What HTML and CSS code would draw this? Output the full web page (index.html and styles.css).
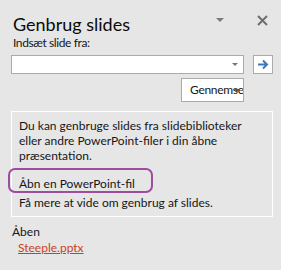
FILE: index.html
```html
<!DOCTYPE html>
<html lang="da">
<head>
<meta charset="UTF-8">
<title>Genbrug slides</title>
<link rel="stylesheet" href="styles.css">
</head>
<body>
<div class="pane">
  <div class="pane-head">
    <h1 class="pane-title">Genbrug slides</h1>
    <span class="head-caret"></span>
    <span class="close">
      <svg width="11" height="11" viewBox="0 0 11 11"><path d="M1 1 L10 10 M10 1 L1 10" stroke="#6e6e6e" stroke-width="2"/></svg>
    </span>
  </div>
  <div class="field-label">Indsæt slide fra:</div>
  <div class="source-row">
    <div class="combo"><span class="combo-caret"></span></div>
    <button class="go-btn">
      <svg width="12" height="11" viewBox="0 0 12 11"><path d="M1 5.5 H10 M6 1.5 L10 5.5 L6 9.5" fill="none" stroke="#3c79c4" stroke-width="2"/></svg>
    </button>
  </div>
  <div class="browse-row">
    <button class="browse-btn">Gennemse<span class="browse-caret"></span></button>
  </div>
  <div class="info">
    <p>Du kan genbruge slides fra slidebiblioteker<br>eller andre PowerPoint-filer i din åbne<br>præsentation.</p>
    <p class="info-open">Åbn en PowerPoint-fil<span class="highlight"></span></p>
    <p>Få mere at vide om genbrug af slides.</p>
  </div>
  <div class="recent-label">Åben</div>
  <a class="recent-file" href="#">Steeple.pptx</a>
</div>
</body>
</html>
```

FILE: styles.css
```css
/* Task pane */
body {
  margin: 0;
  background-color: #e6e6e6;
  font-family: Lato, sans-serif;
  font-size: 12px;
  color: #161616;
}
.pane {
  padding: 0 8px 0 11px;
}
.pane-head {
  display: flex;
  align-items: flex-start;
  padding-top: 14px;
  height: 20px;
}
.pane-title {
  margin: 0 0 0 2px;
  font-size: 18px;
  line-height: 20px;
  font-weight: normal;
  color: #0a0a0a;
  flex: 1;
}
.head-caret {
  width: 0;
  height: 0;
  margin-top: 4px;
  border-left: 4px solid transparent;
  border-right: 4px solid transparent;
  border-top: 4px solid #7a7a7a;
  margin-right: 33px;
}
.close {
  display: flex;
  margin: 1px 5px 0 0;
}
.field-label {
  margin: 2px 0 0 2px;
  line-height: 14px;
  letter-spacing: -0.4px;
}
.source-row {
  display: flex;
  gap: 9px;
  margin-top: 5px;
}
.combo {
  flex: 1;
  box-sizing: border-box;
  height: 19px;
  background-color: #fff;
  border: 1px solid #ababab;
  display: flex;
  align-items: center;
  justify-content: flex-end;
}
.combo-caret {
  width: 0;
  height: 0;
  border-left: 3px solid transparent;
  border-right: 3px solid transparent;
  border-top: 3px solid #777;
  margin-right: 5px;
}
.go-btn {
  box-sizing: border-box;
  width: 20px;
  height: 19px;
  padding: 0;
  background-color: #fff;
  border: 1px solid #ababab;
  display: flex;
  align-items: center;
  justify-content: center;
}
.browse-row {
  display: flex;
  justify-content: flex-end;
  padding-right: 29px;
  margin-top: 4px;
}
.browse-btn {
  position: relative;
  box-sizing: border-box;
  width: 63px;
  height: 24px;
  padding: 0 0 0 8px;
  background-color: #fff;
  border: 1px solid #ababab;
  font: inherit;
  line-height: 22px;
  letter-spacing: -0.3px;
  color: #161616;
  text-align: left;
  overflow: hidden;
  white-space: nowrap;
}
.browse-caret {
  position: absolute;
  right: 3px;
  top: 10px;
  border-left: 3px solid transparent;
  border-right: 3px solid transparent;
  border-top: 3px solid #555;
}
.info {
  box-sizing: border-box;
  margin-top: 9px;
  height: 106px;
  border: 1px solid #fff;
  padding: 6px 7px 0;
}
.info p {
  margin: 0;
  line-height: 15px;
}
.info .info-open {
  position: relative;
  margin: 13px 0 4px;
}
.highlight {
  position: absolute;
  box-sizing: border-box;
  left: -11px;
  top: -8px;
  width: 145px;
  height: 25px;
  border: 2px solid #9c4d9c;
  border-radius: 7px;
}
.recent-label {
  margin: 7px 0 0 1px;
  line-height: 16px;
}
.recent-file {
  display: inline-block;
  margin-left: 7px;
  line-height: 16px;
  color: #c8421e;
}
```
